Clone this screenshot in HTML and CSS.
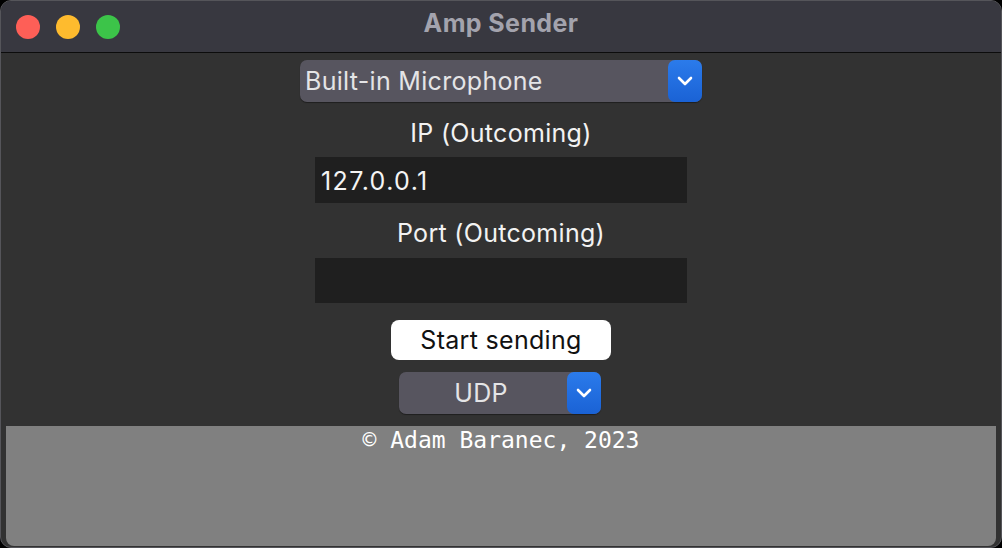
FILE: index.html
```html
<!DOCTYPE html>
<html>
<head>
<meta charset="utf-8">
<link rel="stylesheet" href="styles.css">
</head>
<body>
<div class="window">
  <div class="titlebar">
    <div class="lights">
      <span class="light red"></span>
      <span class="light yellow"></span>
      <span class="light green"></span>
    </div>
    <div class="title">Amp Sender</div>
  </div>
  <div class="content">
    <div class="select select-device">
      <span class="select-text">Built-in Microphone</span>
      <span class="select-btn">
        <svg width="16" height="10" viewBox="0 0 16 10"><path d="M2 2 L8 8 L14 2" fill="none" stroke="#fff" stroke-width="2.6" stroke-linecap="round" stroke-linejoin="round"/></svg>
      </span>
    </div>
    <div class="label label-ip">IP (Outcoming)</div>
    <div class="field field-ip">127.0.0.1</div>
    <div class="label label-port">Port (Outcoming)</div>
    <div class="field field-port"></div>
    <div class="button">Start sending</div>
    <div class="select select-proto">
      <span class="select-text centered">UDP</span>
      <span class="select-btn">
        <svg width="16" height="10" viewBox="0 0 16 10"><path d="M2 2 L8 8 L14 2" fill="none" stroke="#fff" stroke-width="2.6" stroke-linecap="round" stroke-linejoin="round"/></svg>
      </span>
    </div>
    <div class="footer">© Adam Baranec, 2023</div>
  </div>
</div>
</body>
</html>
```

FILE: styles.css
```css
html, body {
  margin: 0;
  padding: 0;
  background: #000;
}
body {
  width: 1002px;
  height: 548px;
  overflow: hidden;
  font-family: Inter, "Liberation Sans", sans-serif;
}
.window {
  box-sizing: border-box;
  width: 1002px;
  height: 548px;
  border: 1px solid #55555a;
  border-radius: 11px;
  overflow: hidden;
  background: #323232;
  display: flex;
  flex-direction: column;
}
.titlebar {
  height: 51px;
  background: #383840;
  border-bottom: 1px solid #0c0c0c;
  display: flex;
  align-items: center;
  position: relative;
  flex: none;
}
.lights {
  display: flex;
  gap: 16px;
  padding-left: 15px;
  margin-top: 1px;
}
.light {
  width: 24px;
  height: 24px;
  border-radius: 50%;
}
.red { background: #fe5f57; }
.yellow { background: #febb2e; }
.green { background: #3cc449; }
.title {
  position: absolute;
  left: 0;
  right: 0;
  top: 8px;
  text-align: center;
  color: #a3a3ad;
  font-weight: 700;
  font-size: 25px;
  line-height: 28px;
  letter-spacing: 0.4px;
}
.content {
  flex: 1;
  display: flex;
  flex-direction: column;
  align-items: center;
}
.select {
  box-sizing: border-box;
  height: 42px;
  background: #57555f;
  border-radius: 7px;
  display: flex;
  align-items: stretch;
  box-shadow: 0 1px 1px rgba(0,0,0,0.4);
}
.select-device {
  width: 402px;
  margin-top: 7px;
}
.select-proto {
  width: 202px;
  margin-top: 12px;
  margin-left: -2px;
}
.select-text {
  flex: 1;
  color: #e4e4e6;
  font-size: 25px;
  line-height: 42px;
  padding-left: 5px;
  letter-spacing: 0.3px;
}
.select-text.centered {
  text-align: center;
  padding-left: 0;
  padding-right: 4px;
}
.select-btn {
  width: 34px;
  flex: none;
  border-radius: 7px;
  background: linear-gradient(#2b7beb, #1a62d5);
  display: flex;
  align-items: center;
  justify-content: center;
}
.label {
  color: #f2f2f2;
  font-size: 25px;
  line-height: 26px;
  height: 26px;
  letter-spacing: 0.3px;
}
.label-ip {
  margin-top: 18px;
  margin-bottom: 11px;
}
.label-port {
  margin-top: 17px;
  margin-bottom: 12px;
}
.field {
  box-sizing: border-box;
  width: 372px;
  background: #1f1f1f;
  color: #f4f4f4;
  font-size: 25px;
  padding-left: 6px;
  letter-spacing: 1.4px;
}
.field-ip {
  height: 46px;
  line-height: 48px;
}
.field-port {
  height: 45px;
}
.button {
  box-sizing: border-box;
  width: 220px;
  height: 40px;
  margin-top: 17px;
  background: #fff;
  border-radius: 8px;
  color: #111;
  font-size: 25px;
  line-height: 40px;
  text-align: center;
  letter-spacing: 0.3px;
}
.footer {
  box-sizing: border-box;
  align-self: stretch;
  margin: 12px 5px 1px 5px;
  height: 120px;
  background: #808080;
  border-radius: 0 0 8px 8px;
  color: #fff;
  font-family: "DejaVu Sans Mono", monospace;
  font-size: 23px;
  line-height: 26px;
  text-align: center;
  padding-top: 1px;
}
```
